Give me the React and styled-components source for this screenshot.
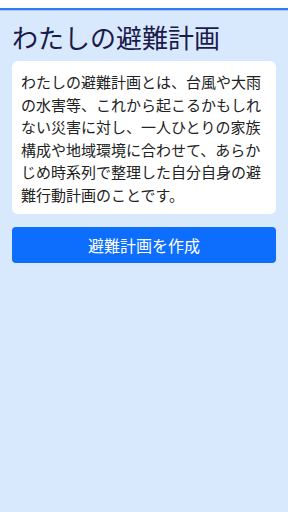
import React from "react";
import styled, { createGlobalStyle } from "styled-components";

const Global = createGlobalStyle`
  html, body { margin: 0; padding: 0; }
  body {
    background: #d8e9fe;
    font-family: "Noto Sans CJK JP", "Noto Sans", sans-serif;
  }
`;

const Page = styled.div`
  min-height: 512px;
  background: #d8e9fe;
  display: flex;
  flex-direction: column;
`;

const TopBar = styled.div`
  height: 8px;
  background: #ffffff;
  border-bottom: 2px solid #2f7cf6;
  box-shadow: 0 1px 0 #a9cdfc;
`;

const Content = styled.main`
  display: flex;
  flex-direction: column;
  padding: 0 12px;
`;

const Title = styled.h1`
  margin: 9px 0 0;
  font-size: 26px;
  font-weight: 400;
  line-height: 36px;
  color: #1b1b4b;
`;

const Card = styled.section`
  margin-top: 6px;
  background: #ffffff;
  border-radius: 6px;
  padding: 10px 8px 8px 9px;
  font-size: 15px;
  line-height: 22.5px;
  color: #222222;
`;

const PrimaryButton = styled.button`
  margin-top: 13px;
  height: 36px;
  border: none;
  border-radius: 4px;
  background: #0d6efd;
  color: #ffffff;
  font-family: inherit;
  font-size: 16px;
  cursor: pointer;
`;

export default function App() {
  return (
    <>
      <Global />
      <Page>
        <TopBar />
        <Content>
          <Title>わたしの避難計画</Title>
          <Card>
            わたしの避難計画とは、台風や大雨の水害等、これから起こるかもしれない災害に対し、一人ひとりの家族構成や地域環境に合わせて、あらかじめ時系列で整理した自分自身の避難行動計画のことです。
          </Card>
          <PrimaryButton>避難計画を作成</PrimaryButton>
        </Content>
      </Page>
    </>
  );
}
